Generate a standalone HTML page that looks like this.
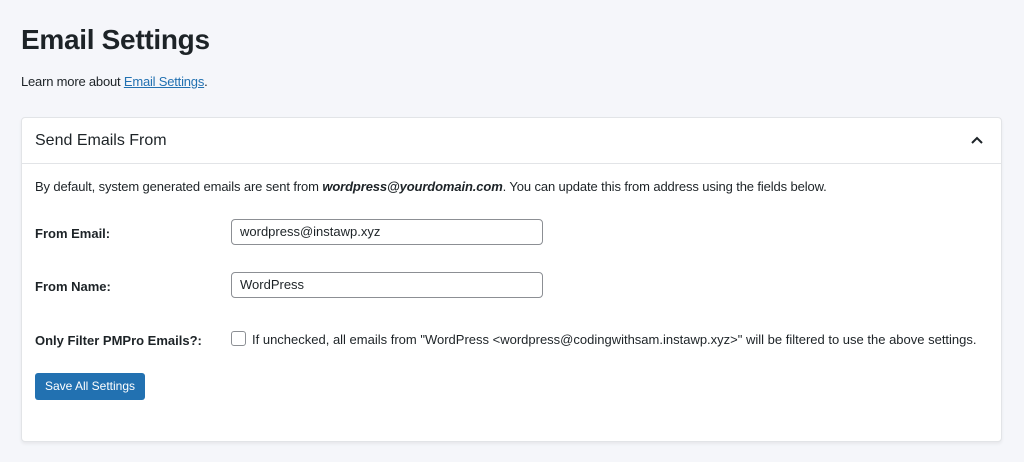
<!DOCTYPE html>
<html><head><meta charset="utf-8"><style>
body{margin:0;width:1024px;height:462px;background:#f5f6fa;font-family:"Liberation Sans",sans-serif;color:#1d2327;position:relative;overflow:hidden}
.a{position:absolute;white-space:nowrap}
h1{position:absolute;left:21px;top:24px;margin:0;font-size:28px;font-weight:700;letter-spacing:-0.3px}
.card{position:absolute;left:21px;top:117px;width:979px;height:323px;background:#fff;border:1px solid #e2e4e7;border-radius:4px;box-shadow:0 2px 3px rgba(0,0,0,.06)}
.hd{position:absolute;left:0;top:0;right:0;height:45px;border-bottom:1px solid #e2e4e7}
.inp{position:absolute;left:231px;width:302px;height:24px;border:1px solid #8c8f94;border-radius:4px;font-size:13px;line-height:24px;padding-left:8px;box-sizing:content-box}
.lab{font-size:13px;font-weight:700}
</style></head><body>
<h1>Email Settings</h1>
<div class="a" style="left:21px;top:74px;font-size:13px;letter-spacing:-0.2px">Learn more about <span style="color:#2271b1;text-decoration:underline">Email Settings</span>.</div>
<div class="card"><div class="hd">
<div class="a" style="left:13px;top:14px;font-size:16px">Send Emails From</div>
<svg class="a" style="left:948px;top:17px" width="14" height="10" viewBox="0 0 14 10"><path d="M2 8L7 3L12 8" fill="none" stroke="#1d2327" stroke-width="2"/></svg>
</div></div>
<div class="a" style="left:35px;top:179px;font-size:13px;letter-spacing:-0.12px">By default, system generated emails are sent from <b><i>wordpress@yourdomain.com</i></b>. You can update this from address using the fields below.</div>
<div class="a lab" style="left:35px;top:226px">From Email:</div>
<div class="inp" style="top:219px;left:231px">wordpress@instawp.xyz</div>
<div class="a lab" style="left:35px;top:279px">From Name:</div>
<div class="inp" style="top:272px">WordPress</div>
<div class="a lab" style="left:35px;top:333px">Only Filter PMPro Emails?:</div>
<div class="a" style="left:231px;top:331px;width:13px;height:13px;border:1px solid #8c8f94;border-radius:3px"></div>
<div class="a" style="left:252px;top:332px;font-size:13px">If unchecked, all emails from "WordPress &lt;wordpress@codingwithsam.instawp.xyz&gt;" will be filtered to use the above settings.</div>
<div class="a" style="left:35px;top:373px;width:110px;height:27px;background:#2271b1;border-radius:3px;color:#fff;font-size:12px;line-height:27px;text-align:center">Save All Settings</div>
</body></html>
